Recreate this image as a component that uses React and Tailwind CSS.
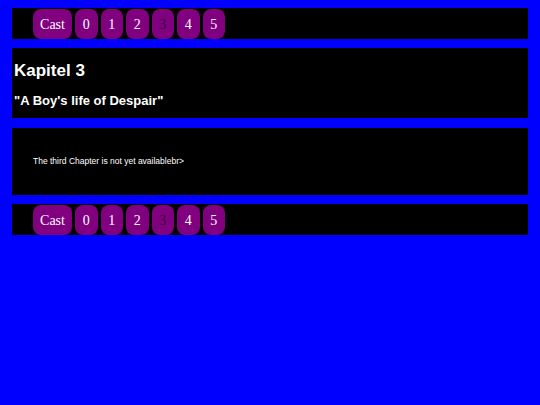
export default function App() {
  const Nav = () => (
    <div className="h-[31px] bg-black flex items-start pt-[1px] pl-[21px] gap-[3px]">
      <div className="h-[30px] w-[39px] rounded-[8px] bg-[#800080] flex items-center justify-center text-white text-[14px] font-['Liberation_Serif',serif]">Cast</div>
      {["0", "1", "2", "3", "4", "5"].map((n) => (
        <div
          key={n}
          className={
            n === "3"
              ? "h-[30px] w-[22.5px] rounded-[8px] bg-[#800080] flex items-center justify-center text-[#3d003d] text-[14px] font-['Liberation_Serif',serif]"
              : "h-[30px] w-[22.5px] rounded-[8px] bg-[#800080] flex items-center justify-center text-white text-[14px] font-['Liberation_Serif',serif]"
          }
        >
          {n}
        </div>
      ))}
    </div>
  );
  return (
    <div className="w-[540px] h-[405px] bg-[#0000ff] pt-2 px-3 flex flex-col font-['Liberation_Sans',Arial,sans-serif]">
      <Nav />
      <div className="mt-[9px] h-[70px] bg-black pl-[2px] pt-[13px] text-white font-bold">
        <div className="text-[17px] leading-[20px]">Kapitel 3</div>
        <div className="mt-[12px] text-[13px] leading-[16px]">"A Boy's life of Despair"</div>
      </div>
      <div className="mt-[10px] h-[67px] bg-black pl-[21px] flex items-center text-white text-[8.5px]">
        The third Chapter is not yet availablebr&gt;
      </div>
      <div className="mt-[9px]">
        <Nav />
      </div>
    </div>
  );
}
